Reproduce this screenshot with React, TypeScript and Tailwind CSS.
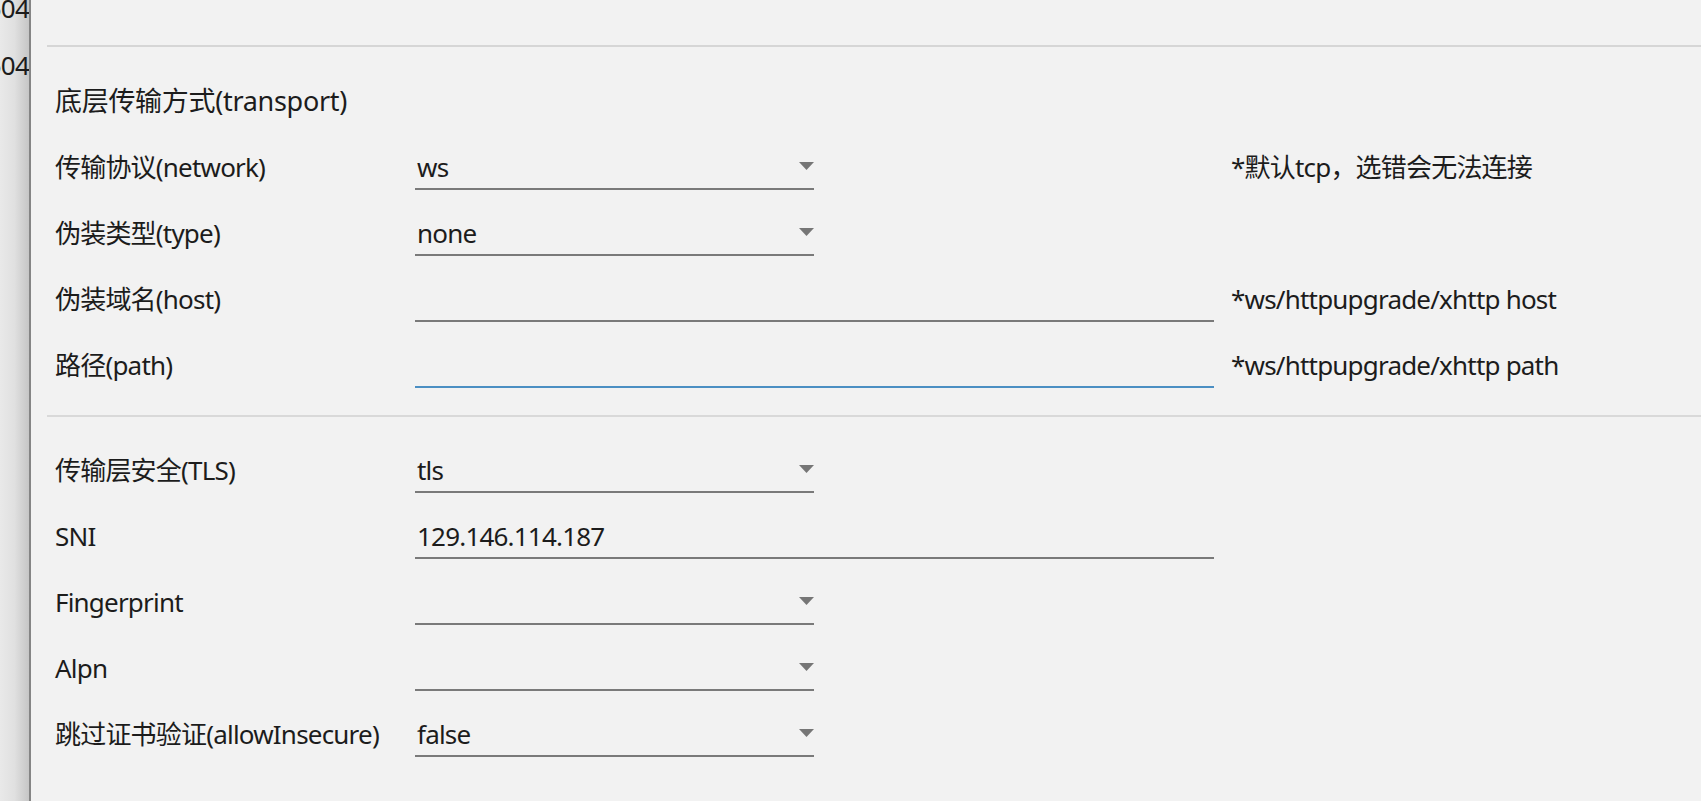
type Field = {
  label: string;
  kind: "select" | "text";
  value?: string;
  hint?: string;
  focused?: boolean;
};

const transport: Field[] = [
  { label: "传输协议(network)", kind: "select", value: "ws", hint: "*默认tcp，选错会无法连接" },
  { label: "伪装类型(type)", kind: "select", value: "none" },
  { label: "伪装域名(host)", kind: "text", hint: "*ws/httpupgrade/xhttp host" },
  { label: "路径(path)", kind: "text", hint: "*ws/httpupgrade/xhttp path", focused: true },
];

const tls: Field[] = [
  { label: "传输层安全(TLS)", kind: "select", value: "tls" },
  { label: "SNI", kind: "text", value: "129.146.114.187" },
  { label: "Fingerprint", kind: "select" },
  { label: "Alpn", kind: "select" },
  { label: "跳过证书验证(allowInsecure)", kind: "select", value: "false" },
];

function Row({ field }: { field: Field }) {
  const isSelect = field.kind === "select";
  return (
    <div className="flex items-start">
      <div className="w-[360px] shrink-0 leading-[42px] whitespace-nowrap">{field.label}</div>
      {/* control column is always as wide as a text box; selects take half */}
      <div className="w-[799px] shrink-0">
        <div
          className={
            (isSelect ? "w-[399px] " : "w-full ") +
            (field.focused ? "border-[#4b8fc3] " : "border-[#7a7a7a] ") +
            "flex h-[44px] items-center justify-between border-b-2 pl-[2px]"
          }
        >
          <span className="leading-[42px]">{field.value ?? ""}</span>
          {isSelect && (
            <svg width="15" height="8" viewBox="0 0 15 8" className="mb-[3px]">
              <polygon points="0,0 15,0 7.5,8" fill="#767676" />
            </svg>
          )}
        </div>
      </div>
      {field.hint && (
        <div className="ml-[17px] leading-[42px] whitespace-nowrap">{field.hint}</div>
      )}
    </div>
  );
}

export default function App() {
  return (
    <div className="flex h-[801px] w-full overflow-hidden bg-[#f2f2f2] font-['Noto_Sans','Noto_Sans_CJK_SC',sans-serif] text-[26px] tracking-[-0.8px] text-[#1c1c1c]">
      {/* window behind, peeking out on the left */}
      <div className="flex w-[31px] shrink-0 flex-col overflow-hidden border-r-2 border-[#858585] bg-gradient-to-r from-[#e9e9e9] via-[#e0e0e0] to-[#c6c6c6]">
        <div className="mt-[-20px] flex justify-end leading-[57px] whitespace-nowrap">504</div>
        <div className="flex justify-end leading-[57px] whitespace-nowrap">504</div>
      </div>

      <div className="flex-1 pl-[16px] pt-[45px]">
        <div className="h-[2px] bg-[#d6d6d6]" />

        <div className="pl-[8px] pt-[33px]">
          <div className="text-[27px] leading-[42px] tracking-[-0.3px]">底层传输方式(transport)</div>
          <div className="mt-[24px] flex flex-col gap-[22px]">
            {transport.map((f) => (
              <Row key={f.label} field={f} />
            ))}
          </div>
        </div>

        <div className="mt-[27px] h-[2px] bg-[#d9d9d9]" />

        <div className="flex flex-col gap-[22px] pl-[8px] pt-[32px]">
          {tls.map((f) => (
            <Row key={f.label} field={f} />
          ))}
        </div>
      </div>
    </div>
  );
}
